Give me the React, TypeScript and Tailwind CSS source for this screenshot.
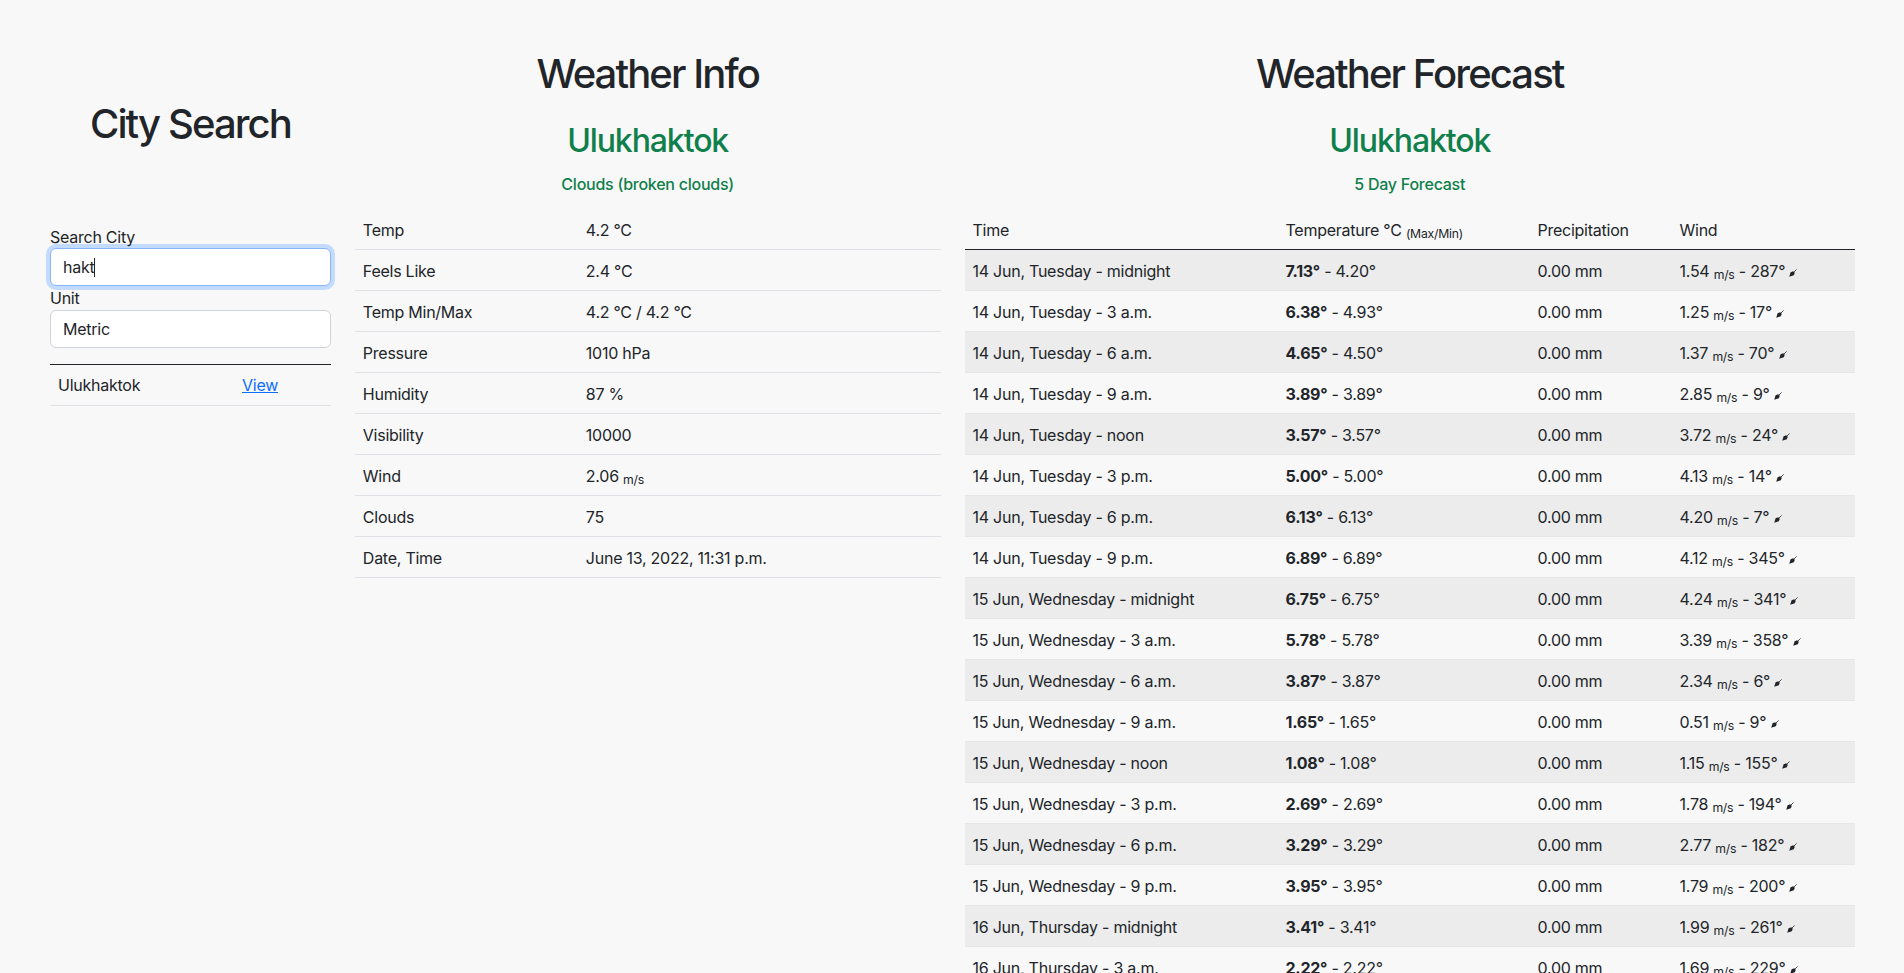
const sm = "text-[12.25px] relative top-[2px]";

const info: [string, React.ReactNode][] = [
  ["Temp", "4.2 °C"],
  ["Feels Like", "2.4 °C"],
  ["Temp Min/Max", "4.2 °C / 4.2 °C"],
  ["Pressure", "1010 hPa"],
  ["Humidity", "87 %"],
  ["Visibility", "10000"],
  ["Wind", <>2.06 <small className="text-[12.25px] relative top-[2px]">m/s</small></>],
  ["Clouds", "75"],
  ["Date, Time", "June 13, 2022, 11:31 p.m."],
];

const rows: [string, string, string, string, string][] = [
  ["14 Jun, Tuesday - midnight", "7.13", "4.20", "1.54", "287"],
  ["14 Jun, Tuesday - 3 a.m.", "6.38", "4.93", "1.25", "17"],
  ["14 Jun, Tuesday - 6 a.m.", "4.65", "4.50", "1.37", "70"],
  ["14 Jun, Tuesday - 9 a.m.", "3.89", "3.89", "2.85", "9"],
  ["14 Jun, Tuesday - noon", "3.57", "3.57", "3.72", "24"],
  ["14 Jun, Tuesday - 3 p.m.", "5.00", "5.00", "4.13", "14"],
  ["14 Jun, Tuesday - 6 p.m.", "6.13", "6.13", "4.20", "7"],
  ["14 Jun, Tuesday - 9 p.m.", "6.89", "6.89", "4.12", "345"],
  ["15 Jun, Wednesday - midnight", "6.75", "6.75", "4.24", "341"],
  ["15 Jun, Wednesday - 3 a.m.", "5.78", "5.78", "3.39", "358"],
  ["15 Jun, Wednesday - 6 a.m.", "3.87", "3.87", "2.34", "6"],
  ["15 Jun, Wednesday - 9 a.m.", "1.65", "1.65", "0.51", "9"],
  ["15 Jun, Wednesday - noon", "1.08", "1.08", "1.15", "155"],
  ["15 Jun, Wednesday - 3 p.m.", "2.69", "2.69", "1.78", "194"],
  ["15 Jun, Wednesday - 6 p.m.", "3.29", "3.29", "2.77", "182"],
  ["15 Jun, Wednesday - 9 p.m.", "3.95", "3.95", "1.79", "200"],
  ["16 Jun, Thursday - midnight", "3.41", "3.41", "1.99", "261"],
  ["16 Jun, Thursday - 3 a.m.", "2.22", "2.22", "1.69", "229"],
];

function Arrow() {
  return (
    <svg width="8" height="8" viewBox="0 0 8 8" className="inline-block align-[0px]">
      <path d="M7.6 0.4 L3.2 4.8" stroke="#212529" strokeWidth="0.8" fill="none" />
      <path d="M4.2 2.2 L1.6 3.2 L0.2 7.8 L4.8 6.2 L5.8 3.8 Z" fill="#212529" />
    </svg>
  );
}

export default function App() {
  return (
    <div className="h-screen overflow-hidden bg-[#f8f8f8] text-[#212529] text-base tracking-[-0.25px] font-['Inter','Liberation_Sans',sans-serif]">
      <div className="ml-[38px] w-[1829px] grid grid-cols-12">
        <section className="col-span-2 px-3">
          <h1 className="mt-[100px] text-center text-[40px] leading-[48px] font-medium tracking-[-1.9px]">City Search</h1>
          <label className="block mt-[77px] leading-6 -mb-px">Search City</label>
          <div className="flex items-center h-[38px] rounded-[6px] bg-white px-3 border border-[#86b7fe] shadow-[0_0_0_4px_#c2dbfe]">
            hakt<span className="w-px h-[19px] bg-[#212529]" />
          </div>
          <label className="block leading-6">Unit</label>
          <div className="flex items-center h-[38px] rounded-[6px] bg-white px-3 border border-[#ced4da]">Metric</div>
          <div className="mt-4 flex items-center h-[42px] border-t border-b border-t-[#212529] border-b-[#dee2e6]">
            <span className="w-[192px] pl-2">Ulukhaktok</span>
            <a href="#" className="text-[#0d6efd] underline">View</a>
          </div>
        </section>

        <section className="col-span-4 px-3">
          <h1 className="mt-[50px] text-center text-[40px] leading-[48px] font-medium tracking-[-1.9px]">Weather Info</h1>
          <h2 className="mt-[24px] text-center text-[32px] leading-[38px] font-medium tracking-[-1.1px] text-[#0f7f4b]">Ulukhaktok</h2>
          <p className="mt-[12px] text-center leading-6 font-medium text-[#0f7f4b]">Clouds (broken clouds)</p>
          <div className="mt-[13px]">
            {info.map(([k, v]) => (
              <div key={k} className="flex items-center h-[41px] pt-px border-b border-[#dee2e6]">
                <span className="w-[223px] pl-2 shrink-0">{k}</span>
                <span className="pl-2">{v}</span>
              </div>
            ))}
          </div>
        </section>

        <section className="col-span-6 px-3">
          <h1 className="mt-[50px] text-center text-[40px] leading-[48px] font-medium tracking-[-1.9px]">Weather Forecast</h1>
          <h2 className="mt-[24px] text-center text-[32px] leading-[38px] font-medium tracking-[-1.1px] text-[#0f7f4b]">Ulukhaktok</h2>
          <p className="mt-[12px] text-center leading-6 font-medium text-[#0f7f4b]">5 Day Forecast</p>
          <div className="mt-[13px]">
            <div className="flex items-center h-[41px] pt-px border-b border-[#212529]">
              <span className="w-[313px] pl-2 shrink-0">Time</span>
              <span className="w-[252px] pl-2 shrink-0">Temperature °C <small className={sm}>(Max/Min)</small></span>
              <span className="w-[142px] pl-2 shrink-0">Precipitation</span>
              <span className="pl-2">Wind</span>
            </div>
            {rows.map((r, i) => (
              <div key={r[0]} className={`flex items-center h-[41px] pt-px border-b border-[#e4e6e8] ${i % 2 === 0 ? "bg-[#ececec]" : ""}`}>
                <span className="w-[313px] pl-2 shrink-0">{r[0]}</span>
                <span className="w-[252px] pl-2 shrink-0"><b className="font-bold">{r[1]}°</b> - {r[2]}°</span>
                <span className="w-[142px] pl-2 shrink-0">0.00 mm</span>
                <span className="pl-2 whitespace-nowrap">{r[3]} <small className={sm}>m/s</small> - {r[4]}° <Arrow /></span>
              </div>
            ))}
          </div>
        </section>
      </div>
    </div>
  );
}
